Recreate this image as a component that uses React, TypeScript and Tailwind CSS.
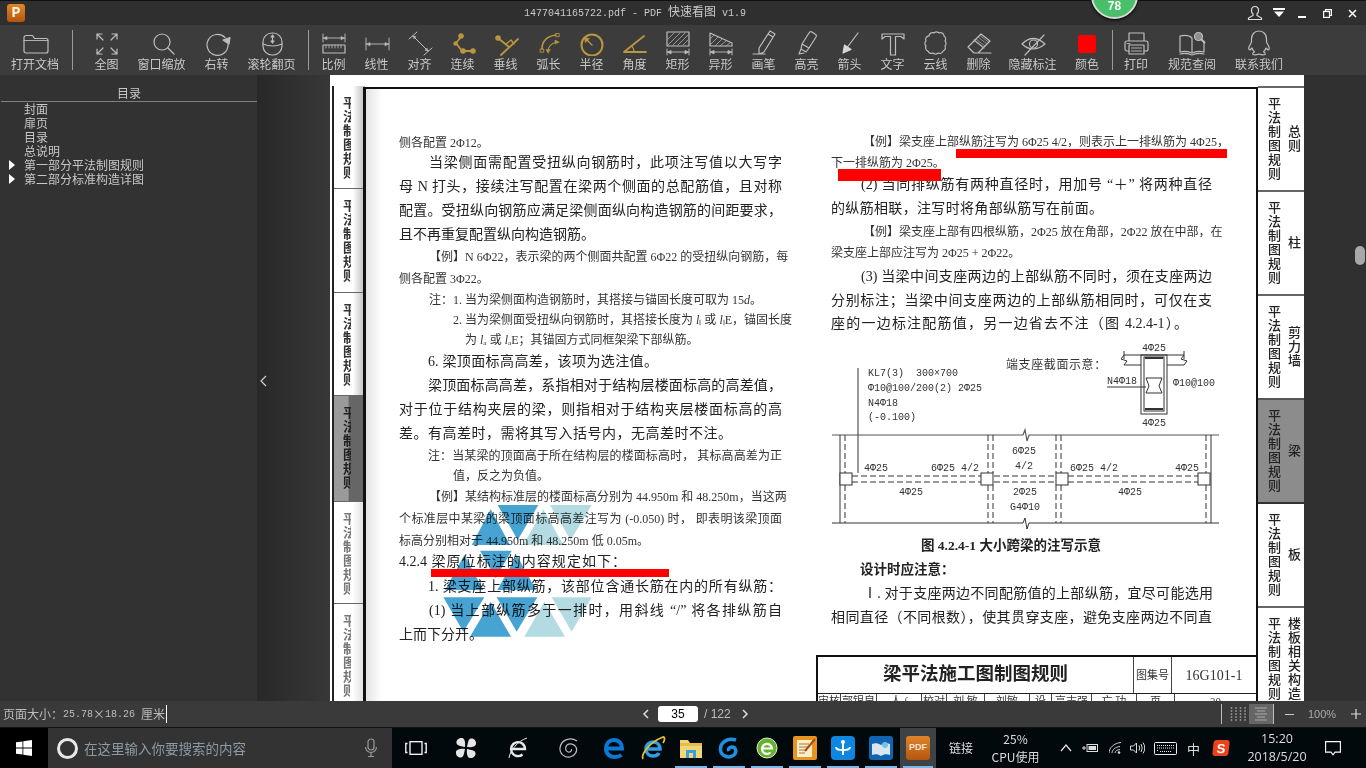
import type { ReactNode } from "react";

const B = "text-[14px] text-[#222] [text-align-last:justify]";
const S = "text-[12px] text-[#333] [text-align-last:justify]";

const leftRows: { c: string; t: ReactNode }[] = [
  { c: `${S} w-fit`, t: "侧各配置 2Φ12。" },
  { c: `${B} ml-[30px] w-[353px]`, t: "当梁侧面需配置受扭纵向钢筋时，此项注写值以大写字" },
  { c: `${B} w-[383px] mt-1`, t: "母 N 打头，接续注写配置在梁两个侧面的总配筋值，且对称" },
  { c: `${B} w-[383px] mt-1`, t: "配置。受扭纵向钢筋应满足梁侧面纵向构造钢筋的间距要求，" },
  { c: `${B} w-fit mt-1`, t: "且不再重复配置纵向构造钢筋。" },
  { c: `${S} ml-[30px] w-[353px] mt-0.5`, t: "【例】N 6Φ22，表示梁的两个侧面共配置 6Φ22 的受扭纵向钢筋，每" },
  { c: `${S} w-fit mt-0.5`, t: "侧各配置 3Φ22。" },
  { c: `${S} ml-[30px] w-[332px] mt-px`, t: <>注：1. 当为梁侧面构造钢筋时，其搭接与锚固长度可取为 15<i>d</i>。</> },
  { c: `${S} ml-[54px] w-[329px]`, t: <>2. 当为梁侧面受扭纵向钢筋时，其搭接长度为 <i>l</i>ₗ 或 <i>l</i>ₗE，锚固长度</> },
  { c: `${S} ml-[66px] w-[226px]`, t: <>为 <i>l</i>ₐ 或 <i>l</i>ₐE；其锚固方式同框架梁下部纵筋。</> },
  { c: `${B} ml-[29px] w-[230px] mt-0.5`, t: "6. 梁顶面标高高差，该项为选注值。" },
  { c: `${B} ml-[29px] w-[354px] mt-1`, t: "梁顶面标高高差，系指相对于结构层楼面标高的高差值，" },
  { c: `${B} w-[383px] mt-1`, t: "对于位于结构夹层的梁，则指相对于结构夹层楼面标高的高" },
  { c: `${B} w-[333px] mt-1`, t: "差。有高差时，需将其写入括号内，无高差时不注。" },
  { c: `${S} ml-[29px] w-[354px] mt-0.5`, t: "注：当某梁的顶面高于所在结构层的楼面标高时， 其标高高差为正" },
  { c: `${S} ml-[54px] w-[90px]`, t: "值，反之为负值。" },
  { c: `${S} ml-[30px] w-[353px] mt-px`, t: "【例】某结构标准层的楼面标高分别为 44.950m 和 48.250m，当这两" },
  { c: `${S} w-[383px] mt-0.5`, t: "个标准层中某梁的梁顶面标高高差注写为 (-0.050) 时， 即表明该梁顶面" },
  { c: `${S} w-[243px] mt-0.5`, t: "标高分别相对于 44.950m 和 48.250m 低 0.05m。" },
  { c: `${B} w-[227px] mt-px`, t: "4.2.4 梁原位标注的内容规定如下：" },
  { c: `${B} ml-[29px] w-[354px] mt-[5px]`, t: "1. 梁支座上部纵筋，该部位含通长筋在内的所有纵筋：" },
  { c: `${B} ml-[30px] w-[353px] mt-1`, t: "(1) 当上部纵筋多于一排时，用斜线 “/” 将各排纵筋自" },
  { c: `${B} w-fit mt-1`, t: "上而下分开。" },
];

const rightRows: { c: string; t: string }[] = [
  { c: `${S} ml-[32px] w-[345px]`, t: "【例】梁支座上部纵筋注写为 6Φ25 4/2，则表示上一排纵筋为 4Φ25，" },
  { c: `${S} w-fit mt-px`, t: "下一排纵筋为 2Φ25。" },
  { c: `${B} ml-[30px] w-[351px] mt-0.5`, t: "(2) 当同排纵筋有两种直径时，用加号 “＋” 将两种直径" },
  { c: `${B} w-[272px] mt-1`, t: "的纵筋相联，注写时将角部纵筋写在前面。" },
  { c: `${S} ml-[32px] w-[349px] mt-[3px]`, t: "【例】梁支座上部有四根纵筋，2Φ25 放在角部，2Φ22 放在中部，在" },
  { c: `${S} w-[178px] mt-px`, t: "梁支座上部应注写为 2Φ25 + 2Φ22。" },
  { c: `${B} ml-[30px] w-[351px] mt-1`, t: "(3) 当梁中间支座两边的上部纵筋不同时，须在支座两边" },
  { c: `${B} w-[381px] mt-1`, t: "分别标注；当梁中间支座两边的上部纵筋相同时，可仅在支" },
  { c: `${B} w-[357px] mt-[3px]`, t: "座的一边标注配筋值，另一边省去不注（图 4.2.4-1）。" },
];

const tabs = [
  { label: "总则", cls: "bg-white border-t-[#666]" },
  { label: "柱", cls: "bg-white border-t-[#666]" },
  { label: "剪力墙", cls: "bg-white border-t-[#666]" },
  { label: "梁", cls: "bg-[#8c8c8c] border-t-[#555]" },
  { label: "板", cls: "bg-white border-t-[#333]" },
  { label: "楼板相关构造", cls: "bg-white border-t-[#666]" },
];

const binderTabs = [
  { h: "h-[103px]", cls: "bg-[linear-gradient(90deg,#fff_60%,#bbb)]", txt: "text-[#333]" },
  { h: "h-[104px]", cls: "bg-[linear-gradient(90deg,#fff_60%,#bbb)]", txt: "text-[#333]" },
  { h: "h-[103px]", cls: "bg-[linear-gradient(90deg,#fff_60%,#bbb)]", txt: "text-[#333]" },
  { h: "h-[106px]", cls: "bg-[linear-gradient(90deg,#9a9a9a_45%,#666_50%)]", txt: "text-[#222]" },
  { h: "h-[102px]", cls: "bg-[linear-gradient(90deg,#fff_60%,#ddd)]", txt: "text-[#777]" },
  { h: "h-[102px]", cls: "bg-[linear-gradient(90deg,#fff_60%,#ddd)]", txt: "text-[#777]" },
];

const GR = "stroke-[#bdbdbd] fill-none";
const GO = "stroke-[#b9963f] fill-none";

function Ico({ tone = GR, children }: { tone?: string; children: ReactNode }) {
  return (
    <svg viewBox="0 0 28 28" className={`w-[28px] h-[28px] shrink-0 ${tone}`} strokeWidth="1.2" strokeLinecap="round" strokeLinejoin="round">
      {children}
    </svg>
  );
}

const Hatch = () => (
  <g strokeWidth="0.7">
    <path d="M4 11l6-6M4 17L16 5M9 17L21 5M14 17L24 7M19 17l5-5" />
  </g>
);

const Dim = () => (
  <g strokeWidth="0.9">
    <path d="M3 21v6M25 21v6M3 24h22" />
    <path d="M4 24l3-1.500v3zM24 24l-3-1.500v3z" fill="#bdbdbd" />
  </g>
);

const tools: { w: string; label: string; icon: ReactNode }[] = [
  { w: "w-[55px]", label: "全图", icon: <Ico><path d="M4 11V6h5M4 6l6 6M19 6h5v5M24 6l-6 6M4 21v5h5M4 26l6-6M24 21v5h-5M24 26l-6-6" /></Ico> },
  { w: "w-[55px]", label: "窗口缩放", icon: <Ico><circle cx="14" cy="14" r="8" /><path d="M20 20l6 6" /></Ico> },
  { w: "w-[55px]", label: "右转", icon: <Ico><path d="M22 9.500A10.500 10.500 0 1 0 25 16" /><path d="M20 12l7-2.500-1 6.500z" fill="#bdbdbd" /></Ico> },
  { w: "w-[55px]", label: "滚轮翻页", icon: <Ico><rect x="5" y="5" width="19" height="22" rx="9" /><path d="M5 16q9.500 4 19 0" /><path d="M14.500 8v6" /><path d="M13 9l1.500-2 1.500 2zM13 13l1.500 2 1.500-2z" fill="#bdbdbd" /></Ico> },
];

const tools2: { w: string; label: string; icon: ReactNode }[] = [
  { w: "w-[43px]", label: "比例", icon: <Ico><path strokeWidth="0.9" d="M3 6v8M25 6v8M3 10h22" /><path d="M4 10l3-1.500v3zM24 10l-3-1.500v3z" fill="#bdbdbd" strokeWidth="0.6" /><rect x="3" y="17" width="22" height="8" /><path strokeWidth="0.8" d="M6 17v3M9 17v3M12 17v3M15 17v3M18 17v3M21 17v3" /></Ico> },
  { w: "w-[43px]", label: "线性", icon: <Ico><path strokeWidth="0.9" d="M3 10v12M26 10v12M3 16h23" /><path d="M4 16l3-1.500v3zM25 16l-3-1.500v3z" fill="#bdbdbd" strokeWidth="0.6" /></Ico> },
  { w: "w-[43px]", label: "对齐", icon: <Ico><path strokeWidth="1" d="M3 11l8-7M18 27l8-7M7 8l15 15" /><path d="M7 8l3 .8-1.800 1.800zM22 23l-3-.8 1.800-1.800z" fill="#bdbdbd" strokeWidth="0.6" /></Ico> },
  { w: "w-[43px]", label: "连续", icon: <Ico tone={GO}><path strokeWidth="1.800" d="M12 9L7 15l6 8h11" /><circle cx="12" cy="8" r="2.200" fill="#b9963f" /><circle cx="6.500" cy="15.500" r="1.600" fill="#b9963f" /><circle cx="14" cy="23" r="2.200" fill="#b9963f" /><circle cx="24" cy="23" r="2.200" fill="#b9963f" /></Ico> },
  { w: "w-[43px]", label: "垂线", icon: <Ico tone={GO}><path strokeWidth="1.800" d="M6 10l11 9M26 11L9 27" /><circle cx="6" cy="10" r="2.200" fill="#b9963f" /><path strokeWidth="1.400" d="M14 16l5-4 3 4" /></Ico> },
  { w: "w-[43px]", label: "弧长", icon: <Ico tone={GO}><rect x="5.500" y="21" width="3.200" height="3.200" strokeWidth="0.9" /><rect x="21" y="5.500" width="3.200" height="3.200" strokeWidth="0.9" /><path strokeWidth="1.600" d="M7 21Q7 9 21 7" /><path strokeWidth="1.200" d="M13 24q0-8 9-10" /><path d="M24 14l-4-2v4zM13 25l-2-3.500h4z" fill="#b9963f" strokeWidth="0.5" /></Ico> },
  { w: "w-[43px]", label: "半径", icon: <Ico tone={GO}><circle cx="14" cy="17" r="10.500" strokeWidth="2" /><path strokeWidth="1.400" d="M14 17L8 11" /><path d="M6.500 9.500l5 1-4 4z" fill="#b9963f" strokeWidth="0.5" /></Ico> },
  { w: "w-[43px]", label: "角度", icon: <Ico tone={GO}><path strokeWidth="1.800" d="M3 24h22M3 24L23 8" /><path strokeWidth="1.200" d="M11 18q2 3 2 6" /></Ico> },
  { w: "w-[43px]", label: "矩形", icon: <Ico><rect x="3" y="4" width="22" height="14" /><Hatch /><Dim /></Ico> },
  { w: "w-[43px]", label: "异形", icon: <Ico><path d="M3 5l22 10v3H3z" /><g strokeWidth="0.7"><path d="M3 11l4-4M3 17l8-8M8 18l7-7M13 18l6-5M19 18l4-3" /></g><Dim /></Ico> },
  { w: "w-[43px]", label: "画笔", icon: <Ico><path d="M20 3l5 3-11 18-5 2v-6zM18 6l5 3M3 26h12" /></Ico> },
  { w: "w-[43px]", label: "高亮", icon: <Ico><path d="M16 5q1-2 3-1l3 2q2 1 1 3l-7 11-7-4zM9 16l-1 5 5 3 3-4M8 21l-2 5 5-1" /></Ico> },
  { w: "w-[43px]", label: "箭头", icon: <Ico><path d="M22 5L10 21" /><path d="M7 25l1.500-8 6.500 4.500z" fill="#d8d8d8" stroke="#d8d8d8" /></Ico> },
  { w: "w-[43px]", label: "文字", icon: <Ico><path d="M3 6h22v5l-3-2.500h-5.500V27h-5V8.500H6L3 11z" /></Ico> },
  { w: "w-[43px]", label: "云线", icon: <Ico><path strokeDasharray="2.200 .6" d="M7 8a3.500 3.500 0 0 1 5-3a3.500 3.500 0 0 1 5 0a3.500 3.500 0 0 1 5 3a3.500 3.500 0 0 1 1 5a3.500 3.500 0 0 1 0 5a3.500 3.500 0 0 1-2 5a3.500 3.500 0 0 1-5 2a3.500 3.500 0 0 1-5 0a3.500 3.500 0 0 1-5-2a3.500 3.500 0 0 1-2-5a3.500 3.500 0 0 1 0-5a3.500 3.500 0 0 1 3-5z" /></Ico> },
  { w: "w-[43px]", label: "删除", icon: <Ico><path d="M3 19L16 6l9 7-12 12H9zM9 12l10 8M13 25h13" /><path strokeWidth="0.6" d="M13 9l9 7M15 7.500l9 7M11 11l9 7" /></Ico> },
];

const tools3: { w: string; label: string; icon: ReactNode }[] = [
  { w: "w-[65px]", label: "隐藏标注", icon: <Ico><path d="M3 16Q14 5 26 16Q14 26 3 16z" /><circle cx="14.500" cy="16" r="4" /><path d="M6 27L25 7" /></Ico> },
  { w: "w-[44px]", label: "颜色", icon: <svg viewBox="0 0 28 28" className="w-[28px] h-[28px]"><rect x="5" y="7" width="18" height="18" rx="2" fill="#ff0000" /></svg> },
];

const tools4: { w: string; label: string; icon: ReactNode }[] = [
  { w: "w-[46px]", label: "打印", icon: <Ico><path d="M7 13V5h15v8M7 23H5a2 2 0 0 1-2-2v-6a2 2 0 0 1 2-2h19a2 2 0 0 1 2 2v6a2 2 0 0 1-2 2h-2" /><rect x="7" y="17" width="15" height="9" /><path strokeWidth="0.9" d="M9.500 20h10M9.500 23h10M5 15.500h3" /></Ico> },
  { w: "w-[66px]", label: "规范查阅", icon: <Ico><path d="M14 10C11 7 6 7 2 8v16c4-1 8-1 12 1 4-2 8-2 12-1V14M14 10v15" /><path d="M2 26c4-1 8-1 12 1 4-2 8-2 12-1" /><circle cx="20.500" cy="8.500" r="4" fill="#8f8f8f" /><path strokeWidth="2" d="M23.500 11.500l3 3" /></Ico> },
  { w: "w-[68px]", label: "联系我们", icon: <Ico><path d="M14 3c-5 0-7.500 4-7.500 8v3L4 19c-.5 2 0 3 1 3l2-2c.5 2 1.500 3 2.500 4-1.500 .5-2 1.500-1.500 2.500 2 .8 4 .3 6-.5 2 .8 4 1.300 6 .5 .5-1 0-2-1.500-2.500 1-1 2-2 2.500-4l2 2c1 0 1.500-1 1-3l-2.500-5v-3c0-4-2.500-8-7.500-8z" /></Ico> },
];

function Tool({ w, label, icon }: { w: string; label: string; icon: ReactNode }) {
  return (
    <div className={`${w} shrink-0 flex flex-col items-center`}>
      {icon}
      <span className="text-[12px] leading-[16px] whitespace-nowrap text-[#c8c8c8]">{label}</span>
    </div>
  );
}

const ToolSep = ({ c }: { c: string }) => <div className={`w-px h-[40px] mt-[2px] shrink-0 bg-[#9a9a9a] ${c}`} />;

function Diagram() {
  const dash = "6 3";
  const txt: [number, number, string][] = [
    [877, 468, "4Φ25"],
    [956, 468, "6Φ25 4/2"],
    [912, 492, "4Φ25"],
    [1025, 451, "6Φ25"],
    [1025, 466, "4/2"],
    [1026, 492, "2Φ25"],
    [1026, 507, "G4Φ10"],
    [1095, 468, "6Φ25 4/2"],
    [1188, 468, "4Φ25"],
    [1131, 492, "4Φ25"],
    [1155, 348, "4Φ25"],
    [1155, 423, "4Φ25"],
  ];
  return (
    <svg viewBox="825 340 400 195" className="block w-[400px] h-[195px] -ml-[7px] mt-1.5 font-['Liberation_Mono','Noto_Sans_CJK_SC',monospace] text-[10px]">
      <g stroke="#333" fill="none" strokeWidth="1">
        <path d="M859 368V473" />
        <path d="M833 435H1024l2-5 2 11 2-6H1220" stroke="#555" strokeWidth="1.2" />
        <path d="M833 523H1024l2-5 2 11 2-6H1220" />
        <path d="M841 435V523M1212 435V523" />
        <path d="M846 435V473M846 485V523M989 435V473M989 485V523M994 435V473M994 485V523M1057 435V473M1057 485V523M1062 435V473M1062 485V523M1207 435V473M1207 485V523" strokeDasharray={dash} />
        <path d="M853 476H982M853 482H982M995 476H1057M995 482H1057M1069 476H1199M1069 482H1199" strokeDasharray={dash} />
        <rect x="841" y="473" width="12" height="12" fill="#fff" />
        <rect x="982" y="473" width="12" height="12" fill="#fff" />
        <rect x="1057" y="473" width="12" height="12" fill="#fff" />
        <rect x="1199" y="473" width="12" height="12" fill="#fff" />
        <path d="M1125 355H1185M1125 365H1142M1168 365H1185M1125 351V359M1185 351V359" />
        <path d="M1125 355l-3 4 6 2-3 4M1185 355l-3 4 6 2-3 4" />
        <rect x="1142" y="355" width="26" height="59" />
        <rect x="1145" y="357" width="20" height="54" />
        <path d="M1147 378l3 8-3 7M1163 378l-3 8 3 7M1147 378H1163M1147 393H1163M1108 387H1147" />
      </g>
      <g fill="#333">
        <rect x="1146" y="357" width="18" height="2" />
        <rect x="1146" y="408" width="18" height="2" />
        {txt.map(([x, y, s], i) => (
          <text key={i} x={x} y={y} textAnchor="middle" dominantBaseline="central">{s}</text>
        ))}
        <text x="869" y="373" dominantBaseline="central" xmlSpace="preserve">KL7(3)  300×700</text>
        <text x="869" y="388" dominantBaseline="central">Φ10@100/200(2) 2Φ25</text>
        <text x="869" y="403" dominantBaseline="central">N4Φ18</text>
        <text x="869" y="417" dominantBaseline="central">(-0.100)</text>
        <text x="1108" y="381" dominantBaseline="central">N4Φ18</text>
        <text x="1174" y="383" dominantBaseline="central">Φ10@100</text>
        <text x="1007" y="366" dominantBaseline="central" className="text-[12px] tracking-[0.6px]">端支座截面示意：</text>
      </g>
    </svg>
  );
}

function Page() {
  return (
    <div className="relative w-[974px] h-full shrink-0 bg-white overflow-hidden">
      <div className="h-full pt-[11px] flex items-stretch blur-[0.35px]">
        {/* binder tabs */}
        <div className="w-[33px] shrink-0 ml-[2px] -mr-[2px] border-l-2 border-l-[#222] overflow-hidden">
          {binderTabs.map((b, i) => (
            <div key={i} className={`${b.h} ${b.cls} border-b border-b-[#666] pt-[10px] pl-[9px]`}>
              <div className="w-[8px] overflow-hidden">
                <div className={`w-[13px] text-[13px] leading-[14px] font-bold ${b.txt}`}>平法制图规则</div>
              </div>
            </div>
          ))}
        </div>

        {/* main box */}
        <div className="flex-1 min-w-0 flex border-t-2 border-t-[#111] border-l-[3px] border-l-[#111] border-r-2 border-r-[#111] mt-[1px] bg-[linear-gradient(90deg,#e4e4e4,#fff_16px)]">
          <div className="w-[431px] shrink-0 pl-[33px] pt-[44px]">
            {leftRows.map((r, i) => (
              <div key={i} lang="zh" className={`h-[20px] leading-[20px] whitespace-nowrap ${r.c}`}>{r.t}</div>
            ))}
          </div>
          <div className="flex-1 min-w-0 pl-[34px] pt-[43px] overflow-hidden">
            {rightRows.map((r, i) => (
              <div key={i} lang="zh" className={`h-[20px] leading-[20px] whitespace-nowrap ${r.c}`}>{r.t}</div>
            ))}
            <Diagram />
            <div className="ml-[90px] mt-px h-[20px] leading-[20px] text-[13.500px] font-bold text-[#222] whitespace-nowrap">图 4.2.4-1 大小跨梁的注写示意</div>
            <div className="ml-[29px] mt-1 h-[20px] leading-[20px] text-[13.500px] font-bold text-[#222]">设计时应注意：</div>
            <div lang="zh" className={`${B} ml-[32px] w-[350px] mt-1 h-[20px] leading-[20px] whitespace-nowrap`}>Ⅰ. 对于支座两边不同配筋值的上部纵筋，宜尽可能选用</div>
            <div lang="zh" className={`${B} w-[381px] mt-1 h-[20px] leading-[20px] whitespace-nowrap`}>相同直径（不同根数），使其贯穿支座，避免支座两边不同直</div>

            <div className="-ml-[15px] mt-[27px] border-t-2 border-l-2 border-[#111] text-[#333]">
              <div className="h-[37px] flex border-b border-b-[#222]">
                <div className="w-[316px] flex items-center justify-center text-[18.500px] font-bold text-[#222] border-r border-r-[#444]">梁平法施工图制图规则</div>
                <div className="w-[38px] flex items-center justify-center text-[11px] border-r border-r-[#444]">图集号</div>
                <div className="flex-1 flex items-center justify-center text-[14px]">16G101-1</div>
              </div>
              <div className="h-[8px] overflow-hidden flex text-[11px] leading-[14px]">
                <div className="w-[23px] text-center border-r border-r-[#444]">审核</div>
                <div className="w-[36px] text-center border-r border-r-[#444]">郭银泉</div>
                <div className="w-[45px] text-center border-r border-r-[#444]">人 ∫</div>
                <div className="w-[25px] text-center border-r border-r-[#444]">校对</div>
                <div className="w-[38px] text-center border-r border-r-[#444]">刘 敏</div>
                <div className="w-[45px] text-center border-r border-r-[#444]">刘敏</div>
                <div className="w-[22px] text-center border-r border-r-[#444]">设计</div>
                <div className="w-[40px] text-center border-r border-r-[#444]">高志强</div>
                <div className="w-[45px] text-center border-r border-r-[#444]">亡 功</div>
                <div className="w-[38px] text-center border-r border-r-[#444]">页</div>
                <div className="flex-1 text-center">30</div>
              </div>
            </div>
          </div>
        </div>

        {/* chapter tabs */}
        <div className="w-[46px] shrink-0 overflow-hidden">
          {tabs.map((t) => (
            <div key={t.label} className={`h-[104px] flex items-center pl-[8px] gap-[6px] border-t-2 text-[#222] text-[13px] font-medium ${t.cls}`}>
              <div className="[writing-mode:vertical-rl] tracking-[1px] leading-[14px]">平法制图规则</div>
              <div className="[writing-mode:vertical-rl] tracking-[1px] leading-[14px]">{t.label}</div>
            </div>
          ))}
        </div>
      </div>

      {/* watermark */}
      <svg viewBox="0 0 1440 930" className="absolute left-0 top-[315px] w-[480px] h-[310px] mix-blend-multiply">
        <g fill="#3e9fcf" opacity="0.95">
          <path d="M482 358L425 465H540z" />
          <path d="M503 345H625L563 450z" />
          <path d="M403 495L345 600H460z" />
          <path d="M450 482H545L497 565z" />
          <path d="M560 495L502 600H618z" />
          <path d="M340 622H463L400 725z" />
          <path d="M482 635L420 740H543z" />
          <path d="M500 622H622L560 725z" />
        </g>
        <g fill="#b4dbe1">
          <path d="M660 345H785L722 450z" />
          <path d="M640 358L580 465H700z" />
          <path d="M643 635L583 740H705z" />
          <path d="M665 622H785L725 725z" />
        </g>
      </svg>

      {/* red annotations */}
      <div className="absolute left-[101px] top-[494px] w-[238px] h-[8px] bg-[#ff0000]" />
      <div className="absolute left-[626px] top-[74px] w-[271px] h-[9px] bg-[#ff0000]" />
      <div className="absolute left-[508px] top-[94px] w-[103px] h-[12px] bg-[#ff0000]" />
    </div>
  );
}

function Sidebar() {
  const items = ["封面", "扉页", "目录", "总说明"];
  const folders = ["第一部分平法制图规则", "第二部分标准构造详图"];
  return (
    <div className="w-[257px] h-full shrink-0 bg-[#323232] text-[12px] leading-[14px] text-[#c8c8c8]">
      <div className="h-[27px] pt-[11px] ml-px text-center border-b border-b-[#808080]">目录</div>
      <div>
        {items.map((t) => (
          <div key={t} className="pl-[24px] h-[14px]">{t}</div>
        ))}
        {folders.map((t) => (
          <div key={t} className="flex items-center h-[14px]">
            <svg viewBox="0 0 6 10" className="ml-[9px] mr-[9px] w-[6px] h-[10px] fill-white"><path d="M0 0l6 5-6 5z" /></svg>
            {t}
          </div>
        ))}
      </div>
    </div>
  );
}

function TitleBar() {
  return (
    <div className="h-[25px] shrink-0 flex items-center bg-[#2f2f2f] border-t border-t-[#111]">
      <div className="ml-[7px] w-[18px] h-[18px] rounded-[3px] bg-[linear-gradient(180deg,#e0872a,#b4540c)] flex items-center justify-center">
        <span className="text-[15px] leading-none font-bold text-[#fff3df] font-['Liberation_Mono',monospace]">P</span>
      </div>
      <div className="ml-[499px] whitespace-nowrap text-[#c9c9c9] text-[10px] font-['Liberation_Mono','Noto_Sans_CJK_SC',monospace]">
        1477041165722.pdf - PDF <span className="text-[12px]">快速看图</span> v1.9
      </div>
      <div className="ml-auto flex items-center">
        <svg viewBox="0 0 16 16" className="w-[16px] h-[16px] fill-none stroke-[#ddd] stroke-[1.2]"><path d="M8 1.500c-2.500 0-3.500 2-3.500 4 0 1.500 .7 2.800 1.500 3.500v1.500L1.500 13v1.500h13V13L10 10.500V9c.8-.7 1.500-2 1.500-3.500 0-2-1-4-3.500-4z" /></svg>
        <svg viewBox="0 0 12 10" className="ml-[10px] w-[12px] h-[10px] fill-white"><rect width="12" height="2" /><path d="M1 3.500h10L6 9z" /></svg>
        <div className="ml-[13px] w-[8px] h-[2px] mt-[7px] bg-white" />
        <svg viewBox="0 0 9 9" className="ml-[17px] w-[9px] h-[9px] fill-none stroke-white stroke-[1.2]"><path d="M2.500 2.500V.6h5.900V6.500H6.500" /><rect x=".6" y="2.500" width="5.900" height="5.900" /></svg>
        <svg viewBox="0 0 9 9" className="ml-[16px] mr-[9px] w-[9px] h-[9px] stroke-white stroke-[1.500]"><path d="M1 1l7 7M8 1L1 8" /></svg>
      </div>
    </div>
  );
}

function Toolbar() {
  return (
    <div className="h-[50px] shrink-0 flex items-start pt-[3px] bg-[#3c3c3c]">
      <Tool
        w="w-[70px]"
        label="打开文档"
        icon={<Ico><path d="M3 9.500A2 2 0 0 1 5 7.500h6.500l2 3H25a2 2 0 0 1 2 2V23a2 2 0 0 1-2 2H5a2 2 0 0 1-2-2z" /><path d="M3 12.500h24" strokeWidth="0.9" /></Ico>}
      />
      <ToolSep c="ml-[2px] mr-[6px]" />
      {tools.map((t) => <Tool key={t.label} {...t} />)}
      <ToolSep c="ml-[9px] mr-[3px]" />
      {tools2.map((t) => <Tool key={t.label} {...t} />)}
      {tools3.map((t) => <Tool key={t.label} {...t} />)}
      <ToolSep c="ml-[3px]" />
      {tools4.map((t) => <Tool key={t.label} {...t} />)}
    </div>
  );
}

function StatusBar() {
  return (
    <div className="h-[26px] shrink-0 flex items-center bg-[#3a3a3a] text-[#bcbcbc]">
      <div className="w-[640px] shrink-0 pl-[3px] flex items-center text-[12px] whitespace-nowrap">
        页面大小：<span className="text-[10px] font-['Liberation_Mono',monospace]">25.78</span>×<span className="text-[10px] font-['Liberation_Mono',monospace]">18.26</span><span className="ml-[6px]">厘米</span>
        <div className="w-px h-[18px] bg-white ml-px" />
      </div>
      <svg viewBox="0 0 12 12" className="w-[12px] h-[12px] fill-none stroke-[#ddd] stroke-[1.5]"><path d="M8 2L4 6l4 4" /></svg>
      <div className="ml-[6px] w-[40px] h-[16px] rounded-[3px] bg-white text-black text-[12px] leading-[16px] text-center font-['Liberation_Sans',sans-serif]">35</div>
      <div className="ml-[6px] w-[29px] text-[12px] whitespace-nowrap font-['Liberation_Sans',sans-serif]">/ 122</div>
      <svg viewBox="0 0 12 12" className="ml-[6px] w-[12px] h-[12px] fill-none stroke-[#ddd] stroke-[1.5]"><path d="M4 2l4 4-4 4" /></svg>
      <div className="ml-[470px] w-px h-[20px] bg-[#bbb]" />
      <svg viewBox="0 0 18 16" className="ml-[7px] w-[18px] h-[16px] stroke-[#8a8a8a]" strokeWidth="1.5" fill="none"><path d="M2.500 1v14M7 1v14M11.500 1v14M16 1v14" strokeDasharray="2 1" /></svg>
      <div className="ml-[2px] w-[24px] h-[20px] bg-[#666] flex items-center justify-center">
        <svg viewBox="0 0 18 16" className="w-[18px] h-[16px] stroke-[#aaa]" fill="none"><path d="M3 2h12M5 5h8M3 8h12M5 11h8M3 14h12" /></svg>
      </div>
      <div className="w-px h-[20px] bg-[#bbb]" />
      <span className="ml-[11px] w-[9px] h-px bg-[#ccc]" />
      <span className="ml-[14px] text-[11px] text-[#aaa] font-['Liberation_Sans',sans-serif]">100%</span>
      <svg viewBox="0 0 10 10" className="ml-[15px] w-[10px] h-[10px] stroke-[#ddd]" strokeWidth="1.2"><path d="M5 0v10M0 5h10" /></svg>
    </div>
  );
}

function TbIcon({ w, active, line, children }: { w: string; active?: boolean; line?: boolean; children: ReactNode }) {
  return (
    <div className={`${w} relative h-full shrink-0 flex items-center justify-center ${active ? "bg-[#3d4245]" : ""}`}>
      {children}
      {line && <div className="absolute left-[3px] right-[3px] bottom-0 h-[2px] bg-[#76b9ed]" />}
    </div>
  );
}

const iconBox = "w-[24px] h-[24px]";

function TaskBar() {
  return (
    <div className="h-[41px] shrink-0 flex items-center bg-[#02090d] text-[#ddd] border-t border-t-[#111]">
      <div className="w-[48px] h-full bg-black flex items-center justify-center">
        <svg viewBox="0 0 16 16" className="w-[16px] h-[16px] fill-white"><path d="M0 2.300l6.500-.9v6.200H0zM7.300 1.300L16 0v7.600H7.300zM0 8.400h6.500v6.200L0 13.700zM7.300 8.400H16V16l-8.700-1.200z" /></svg>
      </div>
      <div className="w-[344px] h-full bg-[#333] flex items-center pl-[9px]">
        <div className="w-[21px] h-[21px] rounded-full border-[3px] border-[#e8e8e8]" />
        <span className="ml-[6px] text-[13.500px] text-[#8b9aa6] whitespace-nowrap">在这里输入你要搜索的内容</span>
        <svg viewBox="0 0 14 20" className="ml-auto mr-[14px] w-[14px] h-[20px] fill-none stroke-[#999] stroke-[1.2]"><rect x="4" y="1" width="6" height="11" rx="3" /><path d="M1.500 9a5.500 5.500 0 0 0 11 0M7 14.500V18M4 18.500h6" /></svg>
      </div>
      <TbIcon w="w-[48px]">
        <svg viewBox="0 0 22 14" className="w-[22px] h-[14px] fill-none stroke-white stroke-[1.3]"><rect x="5" y=".7" width="12" height="12.600" /><path d="M2.500 2.500H.8v9h1.700M19.500 2.500h1.700v9h-1.700" /></svg>
      </TbIcon>
      <TbIcon w="w-[52px]">
        <svg viewBox="0 0 22 22" className="w-[22px] h-[22px] fill-[#e6e6e6]"><path d="M10 10C6 9 2 9 1.500 6 1 3 4 .5 7 1c3 .5 3.500 5 3 9zM12 10c1-4 1-8 4-8.500 3-.500 5.500 2.500 5 5.500-.5 3-5 3.500-9 3zM12 12c4 1 8 1 8.500 4 .5 3-2.500 5.500-5.500 5-3-.5-3.500-5-3-9zM10 12c-1 4-1 8-4 8.500-3 .5-5.500-2.500-5-5.500 .5-3 5-3.500 9-3z" /></svg>
      </TbIcon>
      <TbIcon w="w-[52px]">
        <svg viewBox="0 0 24 24" className={`${iconBox} fill-none stroke-[#e8e8e8]`} strokeWidth="2.400"><path d="M5 13h14a7 7 0 1 0-2.500 5.500" /><path strokeWidth="1" d="M3 22C4 14 12 5 21 2" /></svg>
      </TbIcon>
      <TbIcon w="w-[50px]">
        <svg viewBox="0 0 24 24" className={`${iconBox} fill-none stroke-[#bdbdbd]`} strokeWidth="1.200"><path d="M20 5C14 1 4 3 3 12c-.5 6 5 10 10 9 5-1 8-6 6-10-2-3-6-4-9-2-2 2-2 6 1 7 2 .5 4-1 3.500-3" /></svg>
      </TbIcon>
      <TbIcon w="w-[40px]">
        <svg viewBox="0 0 24 24" className={`${iconBox} fill-none stroke-[#0a78d7]`} strokeWidth="4"><path d="M4 12.500h16c0-5-3-8.500-8-8.500s-8 4-8 9c0 5 4 8 8.500 8 3 0 5-.5 7-2" /></svg>
      </TbIcon>
      <TbIcon w="w-[38px]">
        <svg viewBox="0 0 26 26" className="w-[26px] h-[26px] fill-none">
          <path d="M6 14h14c0-4-3-7-7-7s-7 3-7 7c0 4 3 7 7 7 3 0 5-1 6-3" stroke="#2f9fe4" strokeWidth="3.500" />
          <path d="M3 24C1 20 8 8 23 2c2 0 2 3 0 6" stroke="#e8bd2e" strokeWidth="1.800" />
        </svg>
      </TbIcon>
      <TbIcon w="w-[38px]" line>
        <svg viewBox="0 0 24 22" className="w-[24px] h-[22px]">
          <path d="M1 3h8l2 3h12v15H1z" fill="#f2d675" />
          <path d="M1 6h22v3H1z" fill="#e5bc4e" />
          <path d="M7 13h10v8H7z" fill="#3a9fdd" />
          <path d="M10 16h4v5h-4z" fill="#f2d675" />
        </svg>
      </TbIcon>
      <TbIcon w="w-[38px]" line>
        <svg viewBox="0 0 24 24" className={`${iconBox} fill-none stroke-[#1f8fe0]`} strokeWidth="3.500"><path d="M19 4C10 1 3 7 3.500 14 4 20 12 23 17 19c3-3 2-8-2-8-3 0-4 2-3 4" /></svg>
      </TbIcon>
      <TbIcon w="w-[38px]" line>
        <svg viewBox="0 0 24 24" className={iconBox}>
          <circle cx="12" cy="12" r="10" fill="#63b32e" stroke="#dff0c9" strokeWidth="1" />
          <path d="M7 12.500h10a5 5 0 1 0-1.500 4" fill="none" stroke="#fff" strokeWidth="2.200" />
        </svg>
      </TbIcon>
      <TbIcon w="w-[38px]" line>
        <svg viewBox="0 0 24 24" className={iconBox}>
          <rect width="24" height="24" rx="2" fill="#e8951f" />
          <rect x="4" y="4" width="15" height="17" fill="#fbeecb" />
          <path d="M6 8h10M6 11h10M6 14h8M6 17h6" stroke="#a7773a" />
          <path d="M22 3L12 15" stroke="#b3470e" strokeWidth="2" />
        </svg>
      </TbIcon>
      <TbIcon w="w-[38px]" line>
        <svg viewBox="0 0 24 24" className={iconBox}>
          <rect width="24" height="24" rx="4" fill="#0f86e0" />
          <path d="M12 5v14M5 11c0 3 3 3 7 3s7 0 7-3" fill="none" stroke="#fff" strokeWidth="2" />
          <circle cx="12" cy="6" r="2" fill="#fff" />
        </svg>
      </TbIcon>
      <TbIcon w="w-[38px]" line>
        <svg viewBox="0 0 24 24" className={iconBox}>
          <rect width="24" height="24" rx="3" fill="#1264b0" />
          <path d="M3 8c3-1 6-1 9 1 3-2 6-2 9-1v11c-3-1-6-1-9 1-3-2-6-2-9-1z" fill="#d9e7f3" />
          <circle cx="16" cy="9" r="3" fill="#7cc0ea" />
        </svg>
      </TbIcon>
      <TbIcon w="w-[36px]" active line>
        <div className="w-[24px] h-[24px] rounded-[3px] bg-[linear-gradient(180deg,#e0842b,#b4560f)] flex items-center justify-center text-[9px] font-bold text-[#f6e3cc] font-['Liberation_Sans',sans-serif]">PDF</div>
      </TbIcon>

      <div className="w-[50px] text-center text-[12px]">链接</div>
      <div className="w-[59px] text-center text-[12px] leading-[18px] whitespace-nowrap">
        <div>25%</div>
        <div>CPU使用</div>
      </div>
      <svg viewBox="0 0 12 8" className="ml-[15px] w-[12px] h-[8px] fill-none stroke-[#ddd] stroke-[1.3]"><path d="M1 7l5-6 5 6" /></svg>
      <svg viewBox="0 0 16 10" className="ml-[10px] w-[16px] h-[10px] fill-none stroke-[#ddd]"><rect x="5" y="1.500" width="10.500" height="7" /><rect x="6.500" y="3" width="7.500" height="4" fill="#ddd" stroke="none" /><path d="M0 5h4M2 3v4" /></svg>
      <svg viewBox="0 0 12 12" className="ml-[11px] w-[12px] h-[12px] fill-none stroke-[#ccc]"><path d="M0 11C0 6 5 1 12 .5M3 11c0-3 3-6 8-6.500M6 11c0-2 2-3 5-3.500" /><circle cx="10" cy="10.500" r="1.300" fill="#ddd" stroke="none" /></svg>
      <svg viewBox="0 0 15 12" className="ml-[9px] w-[15px] h-[12px] fill-none stroke-[#ddd]"><path d="M.5 4h3l3-3v10l-3-3h-3zM9 3.500q1.500 2.500 0 5M11 2q2.500 4 0 8M13 .5q3.500 5.500 0 11" /></svg>
      <svg viewBox="0 0 23 13" className="ml-[9px] w-[23px] h-[13px] fill-none stroke-[#eee]"><rect x=".5" y=".5" width="22" height="12" rx="1" /><path d="M3 3.500h17M3 6h17M3 8.500h1M6 9.500h11" strokeDasharray="1 1" /></svg>
      <span className="ml-[10px] w-[13px] text-[13px] leading-none">中</span>
      <div className="ml-[13px] w-[16px] h-[16px] rounded-[3px] bg-[#e8431c] flex items-center justify-center text-[13px] leading-none font-bold text-white font-['Liberation_Sans',sans-serif] -skew-x-6">S</div>
      <div className="ml-[16px] w-[64px] text-center text-[12.500px] leading-[18px] whitespace-nowrap font-['Open_Sans',sans-serif]">
        <div>15:20</div>
        <div>2018/5/20</div>
      </div>
      <svg viewBox="0 0 16 15" className="ml-[16px] w-[16px] h-[15px] fill-none stroke-white stroke-[1.1]"><path d="M.6.6h14.800v10.500H10L8 13.800 6 11.100H.6z" /></svg>
    </div>
  );
}

export default function App() {
  return (
    <div className="relative w-[1366px] h-[768px] flex flex-col overflow-hidden bg-[#303030] font-['Noto_Sans_CJK_SC','Liberation_Sans',sans-serif]">
      <TitleBar />
      <Toolbar />
      <div className="flex-1 min-h-0 flex">
        <Sidebar />
        <div className="w-[73px] h-full shrink-0 flex items-center bg-[linear-gradient(90deg,#282828,#383838)]">
          <svg viewBox="0 0 8 12" className="ml-[2px] mb-[15px] w-[8px] h-[12px] fill-none stroke-[#d0d0d0] stroke-[1.2]"><path d="M7 1L2 6l5 5" /></svg>
        </div>
        <div className="h-full font-['Liberation_Serif','Noto_Sans_CJK_SC',serif]">
          <Page />
        </div>
        <div className="flex-1">
          <div className="ml-[51px] mt-[171px] w-[10px] h-[19px] rounded-full bg-[#a8a8a8]" />
        </div>
      </div>
      <StatusBar />
      <TaskBar />

      {/* rating badge hanging from the top edge */}
      <div className="absolute left-[1091px] -top-[28px] w-[47px] h-[47px] rounded-full bg-[#48bf68] border-2 border-[#d8d8d8] shadow-[0_1px_3px_#000] flex items-end justify-center pb-[4px]">
        <span className="text-[12px] leading-[14px] font-bold text-white font-['Liberation_Sans',sans-serif]">78</span>
      </div>
    </div>
  );
}
